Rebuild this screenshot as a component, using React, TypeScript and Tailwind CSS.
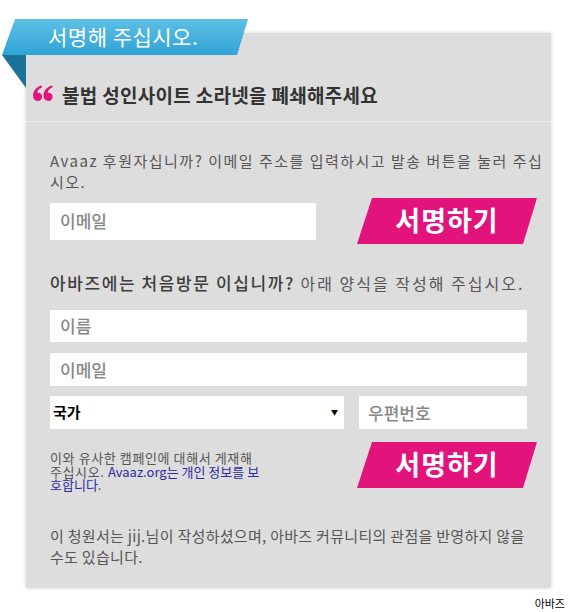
import React from "react";

const F = { fontFamily: '"Noto Sans CJK KR", "Noto Sans", sans-serif' };

function SignButton() {
  return (
    <button
      type="button"
      className="flex h-[46px] w-[180px] shrink-0 items-center justify-center bg-[#e3137c] text-[27px] font-bold leading-none tracking-[1px] text-white [clip-path:polygon(15px_0,180px_0,166px_46px,0_46px)]"
    >
      <span className="pb-[3px]">서명하기</span>
    </button>
  );
}

function Quote() {
  const d =
    "M8.5,0.5 C3.5,1.8 0,5.6 0,10.6 C0,13.9 2.1,16 4.9,16 C7.4,16 9.1,14.2 9.1,11.8 C9.1,9.4 7.4,7.8 5.1,7.8 C4.7,7.8 4.4,7.85 4.1,7.95 C4.6,5.2 6.3,3.3 9.2,2.2 Z";
  return (
    <svg width="20" height="16" viewBox="0 0 20 16" className="shrink-0">
      <path d={d} fill="#e3137c" />
      <path d={d} fill="#e3137c" transform="translate(10.5,0)" />
    </svg>
  );
}

export default function App() {
  return (
    <div
      className="relative h-[612px] w-[570px] overflow-hidden bg-white"
      style={F}
    >
      <div className="pl-[26px] pt-[33px]">
        <div className="relative h-[555px] w-[525px] bg-[#dddddd] shadow-[0_0_4px_rgba(0,0,0,0.18)]">
          {/* header */}
          <div className="h-[89px] border-b border-[#e9e9e9] pl-[7px] pt-[50px]">
            <div className="flex items-center">
              <div className="mr-[9px] mt-[-4px]">
                <Quote />
              </div>
              <span className="text-[19px] font-bold leading-[24px] tracking-[0.3px] text-[#333333]">
                불법 성인사이트 소라넷을 폐쇄해주세요
              </span>
            </div>
          </div>

          <div className="pl-[24px] pr-[24px] pt-[28px]">
            <p className="mr-[-20px] text-[15px] leading-[21px] tracking-[1.5px] text-[#555555]">
              Avaaz 후원자십니까? 이메일 주소를 입력하시고 발송 버튼을 눌러 주십시오.
            </p>

            <div className="mt-[6px] flex h-[46px] items-center">
              <div className="flex h-[37px] w-[266px] shrink-0 items-center bg-white pl-[10px] text-[17px] font-medium text-[#888888]">
                이메일
              </div>
              <div className="ml-[41px] shrink-0">
                <SignButton />
              </div>
            </div>

            <p className="mt-[27px] whitespace-nowrap leading-[24px] text-[#555555]">
              <span className="text-[17px] font-medium tracking-[1.6px] text-[#3d3d3d]">
                아바즈에는 처음방문 이십니까?
              </span>
              <span className="text-[16px] tracking-[2px]"> 아래 양식을 작성해 주십시오.</span>
            </p>

            <div className="mt-[15px] flex h-[32px] w-[477px] items-center bg-white pl-[10px] text-[17px] font-medium text-[#888888]">
              이름
            </div>
            <div className="mt-[11px] flex h-[33px] w-[477px] items-center bg-white pl-[10px] text-[17px] font-medium text-[#888888]">
              이메일
            </div>
            <div className="mt-[10px] flex w-[477px] gap-[15px]">
              <div className="flex h-[33px] w-[294px] items-center justify-between bg-white pl-[3px] pr-[6px]">
                <span className="text-[15px] font-bold text-black">국가</span>
                <span className="text-[7px] text-black">▼</span>
              </div>
              <div className="flex h-[33px] w-[168px] items-center bg-white pl-[9px] text-[17px] font-medium text-[#888888]">
                우편번호
              </div>
            </div>

            <div className="mt-[13px] flex items-start">
              <p className="mt-[9px] w-[214px] shrink-0 text-[13px] leading-[13.5px] tracking-[0.6px] text-[#555555]">
                이와 유사한 캠페인에 대해서 게재해 주십시오.{" "}
                <span className="tracking-[0px] text-[#2b2ba0]">Avaaz.org는 개인 정보를 보호합니다</span>.
              </p>
              <div className="ml-[93px] shrink-0">
                <SignButton />
              </div>
            </div>

            <p className="mt-[33px] text-[15px] leading-[21px] tracking-[0.3px] text-[#555555]">
              이 청원서는 jij.님이 작성하셨으며, 아바즈 커뮤니티의 관점을 반영하지 않을 수도 있습니다.
            </p>
          </div>
        </div>
      </div>

      <div className="pr-[5px] pt-[8px] text-right text-[11px] leading-[14px] text-black">
        아바즈
      </div>

      {/* ribbon overlay */}
      <div className="absolute left-0 top-[19px] h-[70px] w-[250px]">
        <div className="absolute left-[2px] top-[36px] h-[33px] w-[24px] bg-[#1c7399] [clip-path:polygon(0_0,24px_0,24px_33px)]" />
        <div className="absolute left-0 top-0 flex h-[36px] w-[250px] items-center bg-gradient-to-b from-[#5ec0e6] to-[#2ea3d6] pl-[48px] text-[21px] leading-none tracking-[0.5px] text-white [clip-path:polygon(15px_0,248px_0,237px_36px,2px_36px)]">
          <span className="pb-[1px]">서명해 주십시오.</span>
        </div>
      </div>
    </div>
  );
}
